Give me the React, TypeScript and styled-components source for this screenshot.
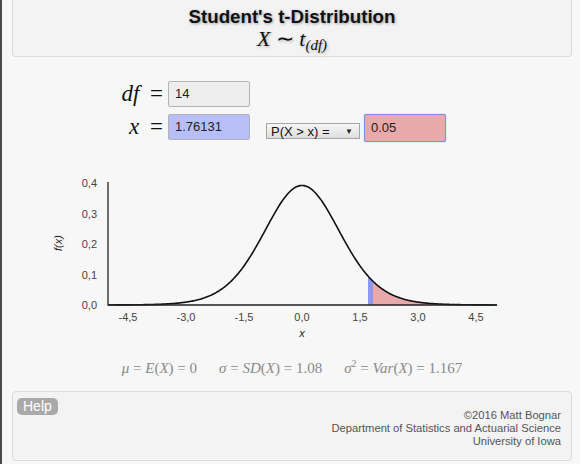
import React from "react";
import styled, { createGlobalStyle } from "styled-components";

const GlobalStyle = createGlobalStyle`
  html, body { margin: 0; padding: 0; background: #f7f7f7; }
  body { font-family: "Liberation Sans", Arial, sans-serif; color: #222; }
`;

const Page = styled.div`
  box-sizing: border-box;
  min-height: 464px;
  border-left: 2px solid #4a4a4a;
  padding: 0 8px 0 10px;
  display: flex;
  flex-direction: column;
`;

const Header = styled.header`
  box-sizing: border-box;
  height: 57px;
  background: #f3f3f3;
  border: 1px solid #dadada;
  border-top: none;
  border-radius: 0 0 4px 4px;
  text-align: center;
  padding-top: 6px;
`;

const Title = styled.div`
  font-family: "Liberation Sans", Arial, sans-serif;
  font-weight: bold;
  font-size: 18.7px;
  line-height: 22px;
  color: #111;
  text-shadow: 1px 1px 3px rgba(0, 0, 0, 0.35);
`;

const Subtitle = styled.div`
  font-family: "Liberation Serif", "Times New Roman", serif;
  font-size: 22px;
  line-height: 22px;
  color: #111;
  text-shadow: 1px 1px 3px rgba(0, 0, 0, 0.3);
`;

const Ital = styled.i`
  font-style: italic;
`;

const Sub = styled.sub`
  font-size: 15px;
  font-style: italic;
  vertical-align: -4px;
  line-height: 0;
`;

const Sup = styled.sup`
  font-size: 10px;
  vertical-align: 6px;
  line-height: 0;
`;

const Form = styled.div`
  margin: 24px 0 0 96px;
  display: grid;
  grid-template-columns: 60px 82px 114px 82px;
  grid-auto-rows: 26px;
  row-gap: 7px;
`;

const Label = styled.div`
  font-family: "Liberation Serif", "Times New Roman", serif;
  font-size: 23px;
  line-height: 26px;
  text-align: right;
  padding-right: 5px;
  color: #111;
  white-space: nowrap;
  word-spacing: 5px;
`;

const Field = styled.div<{ $bg: string; $focus?: boolean }>`
  box-sizing: border-box;
  width: 82px;
  height: ${(p) => (p.$focus ? "28px" : "26px")};
  background: ${(p) => p.$bg};
  border: 1px solid ${(p) => (p.$focus ? "#7f8fe6" : "#b3b3b3")};
  box-shadow: ${(p) => (p.$focus ? "0 0 1px #7f8fe6" : "none")};
  border-radius: 2px;
  font-size: 13px;
  line-height: ${(p) => (p.$focus ? "26px" : "24px")};
  padding-left: 6px;
  color: #222;
  font-family: "Liberation Sans", Arial, sans-serif;
`;

const Spacer = styled.div``;

const SelectBox = styled.div`
  box-sizing: border-box;
  margin: 9px 4px 0 16px;
  height: 16px;
  border: 1px solid #a6a6a6;
  background: linear-gradient(#f6f6f6, #dedede);
  display: flex;
  align-items: center;
  justify-content: space-between;
  padding: 0 6px 0 4px;
  font-size: 13px;
  color: #111;
  white-space: nowrap;
`;

const Arrow = styled.span`
  font-size: 8px;
  color: #222;
`;

const ChartSvg = styled.svg`
  display: block;
  margin-top: 20px;
  width: 560px;
  height: 190px;
`;

const Stats = styled.div`
  margin-top: 8px;
  height: 20px;
  line-height: 20px;
  display: flex;
  justify-content: center;
  gap: 22px;
  font-family: "Liberation Serif", "Times New Roman", serif;
  font-size: 15px;
  color: #8a8a8a;
`;

const Footer = styled.footer`
  box-sizing: border-box;
  margin-top: 13px;
  height: 70px;
  background: #f3f3f3;
  border: 1px solid #dadada;
  border-radius: 4px;
  display: flex;
  justify-content: space-between;
  align-items: flex-start;
  padding: 6px 10px 0 4px;
`;

const HelpButton = styled.button`
  font-family: "Liberation Sans", Arial, sans-serif;
  font-size: 14px;
  color: #fff;
  background: #a9a9a9;
  border: none;
  border-radius: 5px;
  height: 17px;
  line-height: 17px;
  padding: 0 6px;
  cursor: pointer;
`;

const Credits = styled.div`
  margin-top: 11px;
  text-align: right;
  font-size: 11.2px;
  line-height: 13px;
  color: #555;
`;

const X0 = 302;
const SX = 38.67;
const Y0 = 305;
const SY = 305;
const DF = 14;
const C = 0.39189;
const pdf = (t: number) => C * Math.pow(1 + (t * t) / DF, -(DF + 1) / 2);
const px = (t: number) => X0 + t * SX;
const py = (f: number) => Y0 - f * SY;
const tOf = (x: number) => (x - X0) / SX;

function areaPath(xa: number, xb: number) {
  let d = `M ${xa} ${Y0}`;
  for (let x = xa; x <= xb; x += 0.5) d += ` L ${x} ${py(pdf(tOf(x))).toFixed(2)}`;
  d += ` L ${xb} ${py(pdf(tOf(xb))).toFixed(2)} L ${xb} ${Y0} Z`;
  return d;
}

function Chart() {
  const pts: string[] = [];
  for (let x = 108; x <= 497; x += 1) pts.push(`${x},${py(pdf(tOf(x))).toFixed(2)}`);
  const yTicks = [0, 0.1, 0.2, 0.3, 0.4];
  const xTicks = [-4.5, -3, -1.5, 0, 1.5, 3, 4.5];
  const fmt = (v: number) => v.toFixed(1).replace(".", ",");
  return (
    <ChartSvg viewBox="12 160 560 190">
      <path d={areaPath(373, 497)} fill="#e8a9ab" />
      <path d={areaPath(368, 373)} fill="#8e98ee" />
      <polyline points={pts.join(" ")} fill="none" stroke="#111" strokeWidth={1.6} />
      <line x1={108} y1={182} x2={108} y2={305.5} stroke="#222" strokeWidth={1.3} />
      <line x1={108} y1={305} x2={497} y2={305} stroke="#222" strokeWidth={1.3} />
      {yTicks.map((v) => (
        <text key={v} x={97} y={py(v) + 4} fontSize={11} fill="#444" textAnchor="end" fontFamily="Liberation Sans, Arial, sans-serif">
          {fmt(v)}
        </text>
      ))}
      {xTicks.map((v) => (
        <text key={v} x={px(v)} y={321} fontSize={11} fill="#444" textAnchor="middle" fontFamily="Liberation Sans, Arial, sans-serif">
          {fmt(v)}
        </text>
      ))}
      <text x={302} y={337} fontSize={11} fontStyle="italic" fill="#222" textAnchor="middle" fontFamily="Liberation Sans, Arial, sans-serif">
        x
      </text>
      <text x={0} y={0} fontSize={11} fontStyle="italic" fill="#222" textAnchor="middle" fontFamily="Liberation Sans, Arial, sans-serif" transform="translate(62 243) rotate(-90)">
        f(x)
      </text>
    </ChartSvg>
  );
}

export default function App() {
  return (
    <>
      <GlobalStyle />
      <Page>
        <Header>
          <Title>Student's t-Distribution</Title>
          <Subtitle>
            <Ital>X</Ital> ∼ <Ital>t</Ital>
            <Sub>(df)</Sub>
          </Subtitle>
        </Header>
        <Form>
          <Label>
            <Ital>df</Ital> =
          </Label>
          <Field $bg="#eeeeee">14</Field>
          <Spacer />
          <Spacer />
          <Label>
            <Ital>x</Ital> =
          </Label>
          <Field $bg="#b8bff8">1.76131</Field>
          <SelectBox>
            <span>P(X &gt; x) =</span>
            <Arrow>▼</Arrow>
          </SelectBox>
          <Field $bg="#e8a9ab" $focus>
            0.05
          </Field>
        </Form>
        <Chart />
        <Stats>
          <span>
            <Ital>μ</Ital> = <Ital>E</Ital>(<Ital>X</Ital>) = 0
          </span>
          <span>
            <Ital>σ</Ital> = <Ital>SD</Ital>(<Ital>X</Ital>) = 1.08
          </span>
          <span>
            <Ital>σ</Ital>
            <Sup>2</Sup> = <Ital>Var</Ital>(<Ital>X</Ital>) = 1.167
          </span>
        </Stats>
        <Footer>
          <HelpButton>Help</HelpButton>
          <Credits>
            ©2016 Matt Bognar
            <br />
            Department of Statistics and Actuarial Science
            <br />
            University of Iowa
          </Credits>
        </Footer>
      </Page>
    </>
  );
}
